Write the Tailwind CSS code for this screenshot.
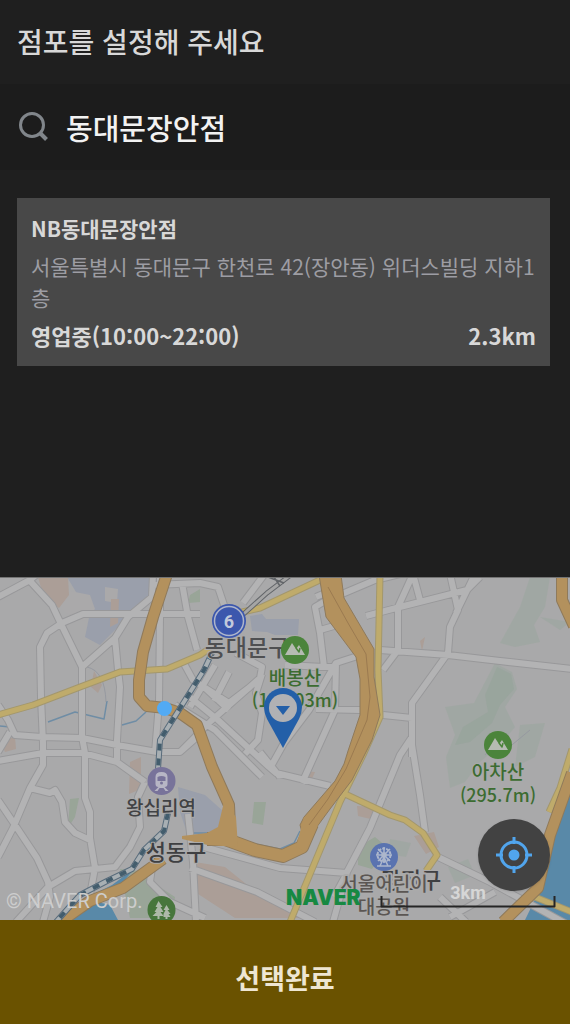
<!DOCTYPE html>
<html lang="ko">
<head>
<meta charset="utf-8">
<meta name="viewport" content="width=device-width, initial-scale=1">
<title>점포 설정</title>
<script src="https://cdn.jsdelivr.net/npm/@tailwindcss/browser@4"></script>
</head>
<body class="flex min-h-screen flex-col bg-[#1f1f1f] font-['Noto_Sans_CJK_KR',sans-serif] text-[#d8d8d8]">
<header class="px-[17px] pt-[19px] pb-[21px]">
  <h1 class="text-[28px] leading-[44px] font-medium">점포를 설정해 주세요</h1>
</header>
<main class="flex flex-1 flex-col">
  <form class="flex h-[86px] items-center gap-4 bg-[#1c1c1c] px-[18px]" onsubmit="return false">
    <label for="q" class="shrink-0" aria-label="점포 검색">
      <svg class="size-8" viewBox="0 0 32 32" fill="none" stroke="#81868b" stroke-width="3"><circle cx="14" cy="14" r="11.500"/><path d="M22 22l6.500 6.500" stroke-width="4"/></svg>
    </label>
    <input id="q" type="text" value="동대문장안점" class="w-full min-w-0 bg-transparent text-[29px] leading-10 font-medium text-[#f2f2f2] outline-none">
  </form>
  <section class="mx-[17px] mt-7 mr-5 bg-[#484848] px-[14px] py-[15px]">
    <h2 class="text-[21px] leading-[30px] font-bold">NB동대문장안점</h2>
    <p class="-mr-1 mt-2 text-[21px] leading-[31px] break-all text-[#9d9da3]">서울특별시 동대문구 한천로 42(장안동) 위더스빌딩 지하1층</p>
    <p class="mt-1.5 flex justify-between text-[22px] leading-8 font-bold"><span>영업중(10:00~22:00)</span><span>2.3km</span></p>
  </section>
</main>
<section class="relative h-[343px] overflow-hidden bg-[#a8a8a8]" aria-label="지도">
  <svg class="block h-full w-full" viewBox="0 0 570 343" preserveAspectRatio="xMidYMid slice" fill="none" stroke-linejoin="round">
    <defs>
      <g id="mountain"><circle r="14" fill="#4b843b"/><path d="M-10 5L-3-7 1-1 4-5 10 5Z" fill="#b5bbb2"/><path d="M1-2l3 4 1-4" stroke="#4b843b" stroke-width="1.500"/></g>
      <path id="roads" d="M-2 20L30 3 36-2M30 4L52 28 61 47 82 90 82 160 85 176 85 221 90 235 90 261 95 291 90 318M200 37L83 37 62 46 47 56 40 70 41 120 43 166 43 188 30 211 13 251-2 280M153-2L152 20 128 40 115 61 82 90M115 61L118 93 120 110 117 163 117 183M160-2L160 40 159 126 155 176M182 6L188 40 197 73M153 8L200 6 218 10 224 28M-2 128L8 143 15 158 42 160 82 161 117 168 157 175 180 175 197 160M-2 184L43 176 83 176 117 185 145 205M-2 175L10 155M-2 223L15 248 37 281 48 305 50 320 43 345M30 211L50 216 55 213 62 225 65 245 75 256 90 263M16 345L48 310 75 294 95 292 115 290 130 270 140 250 138 220 145 205M264-2L243 26M182 83L193 103 229 126 250 110M204 110L229 133M186 117L218 143 269 190 276 196 330 209M175 128L215 153 262 200M236 76L262 90 260 101 211 144 180 175M215 88L190 130M229 95L214 124M262 97L256 116 262 136 258 163 245 177M269 193L284 166 309 133 336 86 370 75M302 206L335 133 336 86M316 20L330 14M332 20L315 30 320 56 324 90M320 53L355 43M309 90L336 90M285 88L324 90M316 132L360 133M342 17L375 3 400-3M366 39L400 30 467 13 480 0M413-3L398 30 398 73 383 93M413-3L420 23M450-3L458 33 450 50 448 76 412 126 412 180M475-3L456 36M380 73L448 78 500 84 572 92M383 138L412 141M412 160L400 178 370 251 347 295 333 345M412 168L420 218 425 255M190 291L257 315 315 345M200 269L280 291 347 296M188 237L193 285 196 345M438 280L490 305 572 350M347 296L334 320M440 320L466 345M450 340L495 315M152 290L150 305 170 325 205 341M260 175L280 200"/>
      <path id="rail" d="M212 76L204 93 160 163 158 192M168 236L164 254 144 273 132 292 107 304 80 318 56 345"/>
      <path id="highway" d="M167-3L153 40 143 75 139 103 139 120 147 129 165 131 180 136 197 148 212 190 229 228 230 250 225 262"/>
      <path id="ring" d="M207 262L225 262 255 273 283 279 302 270 312 247"/>
      <path id="yel" d="M-2 138L33 128 80 110 120 95 167 92 200 78 212 70M238 36L260 31 322 2M380-2L378 93 380 140 363 178 340 225 290 345M345 217L390 238 405 243 423 256 437 278 426 294M572 172L560 211 549 235M530 318L572 335"/>
    </defs>
    <rect width="570" height="343" fill="#a9a9aa"/>
    <!-- land use -->
    <path fill="#9a9fab" d="M67 0H150V22L125 42 115 53 100 68 85 60 90 36 82 25ZM178 210L205 218 223 234 220 252 210 260 188 259 180 235ZM250 39L262 37 266 42 299 42 298 58 275 58 267 55 252 54Z"/>
    <path fill="#aaa9aa" d="M70 14L90 18 95 32 84 44 66 36 60 30ZM105 10L118 12 117 26 105 24Z"/>
    <path fill="#ab9e97" d="M38 0H68L69 18 59 31 44 21ZM111 22L119 22 118 46 110 50ZM94 94L102 108 98 116 91 110ZM195 285L225 290 256 315 313 341H235L195 315ZM357 229L378 230 375 243 358 239ZM305 194L315 195 311 204 302 203ZM0 164L15 160 16 172 5 175ZM414 259L434 255 439 270 426 277ZM130 185L141 180 141 212 129 217ZM420 64L425 60 422 74Z"/>
    <path fill="#99a598" d="M254 225L266 225 263 248 252 246ZM70 222L79 221 75 240 68 251ZM190 18L200 12V25L188 26ZM120 292L150 295 152 305 175 320 172 341H130ZM358 270L375 260 387 270 372 292 358 288Z"/>
    <path fill="#9ba69f" d="M530 0H550L545 30 534 48 540 65 515 70 500 66 520 30ZM495 86L512 95 517 112 505 130 515 150 500 168 480 185 465 205 450 211 446 180 455 158 445 130 474 126ZM520 148L545 146 535 180 515 190ZM390 262L411 266 406 280 388 277ZM448 290L468 282 475 298 455 306ZM540 40L570 45 560 53Z" opacity=".6"/>
    <path fill="#94a39a" d="M497 90L511 97 514 112 500 128 492 146 470 165 455 168 463 150 488 135 485 118Z" opacity=".6"/>
    <path fill="#5989a8" d="M572 200L558 240 550 270 540 312 525 343H572ZM135 291L112 308 98 315 118 311ZM72 343L93 324 110 328 118 343Z"/>
    <path stroke="#6f8da5" stroke-width="1.500" d="M48 145L75 135 104 142 107 124M122 148L136 144 146 135M0 149L10 150M192 256H208M238 262L255 267 280 272 294 266 300 254"/>
    <path stroke="#9699a0" stroke-width="1" d="M87 90Q105 94 106 125M500 162L485 178M507 172L530 153"/>
    <use href="#roads" stroke="#98989a" stroke-width="8"/>
    <use href="#roads" stroke="#b3b3b4" stroke-width="6"/>
    <!-- yellow arterials -->
    <use href="#yel" stroke="#a3976d" stroke-width="7"/>
    <use href="#yel" stroke="#bfab6b" stroke-width="5"/>
    <!-- expressways -->
    <path stroke="#8f7a5b" stroke-width="12" d="M163 282L123 311 90 324 60 345M572 196L550 258 538 311 503 345M562-3L562 23 574 49"/>
    <use href="#highway" stroke="#8f7a5b" stroke-width="12"/>
    <use href="#ring" stroke="#8f7a5b" stroke-width="14"/>
    <path fill="#b3915d" stroke="#8f7a5b" d="M319-2H341L344 21 374 72V100L380 138 372 163 352 203 330 232 305 266 300 248 304 240 335 204 344 187 348 174 360 138V102L356 80 326 40Z"/>
    <path stroke="#b3915d" stroke-width="10" d="M163 282L123 311 90 324 60 345M572 196L550 258 538 311 503 345M562-3L562 23 574 49"/>
    <use href="#highway" stroke="#b3915d" stroke-width="10"/>
    <use href="#ring" stroke="#b3915d" stroke-width="12"/>
    <path fill="#b3915d" d="M224 225L236 240 238 270 208 268 182 262V259L207 256 218 250ZM304 240L322 240 305 274 296 270Z"/>
    <path stroke="#9b7a50" d="M328 10L348 46 366 77 370 120 367 143 346 192 328 222 309 248"/>
    <!-- railways -->
    <path stroke="#626569" stroke-width="5" d="M292-3L267 16 238 42"/><path stroke="#a5a5a5" stroke-width="3" d="M292-3L267 16 238 42"/>
    <path stroke="#626569" stroke-width="1.500" d="M274 0L280 9M268 0L284 6"/>
    <use href="#rail" stroke="#596c7c" stroke-width="6"/>
    <use href="#rail" stroke="#a8afb3" stroke-width="4"/>
    <use href="#rail" stroke="#435d6d" stroke-width="4" stroke-dasharray="7 8"/>
    <circle cx="164.500" cy="131.500" r="7.500" fill="#52aaf4"/>
    <!-- place labels -->
    <g class="font-['Noto_Sans_CJK_KR',sans-serif] font-medium" text-anchor="middle" paint-order="stroke" stroke="#aaaaaa" stroke-width="2">
      <text x="247" y="79" font-size="23" fill="#4f5052">동대문구</text>
      <text x="176" y="283" font-size="22" fill="#3f4042">성동구</text>
      <text x="411" y="311" font-size="22" fill="#3f4042">광진구</text>
      <text x="161" y="238" font-size="19" fill="#414244">왕십리역</text>
      <g fill="#3c6c31" font-size="19"><text x="295" y="108">배봉산</text><text x="295" y="130" font-size="18">(110.03m)</text><text x="498" y="202">아차산</text><text x="498" y="225" font-size="18">(295.7m)</text></g>
      <g fill="#5b5653" font-size="19" stroke-width="4"><text x="384" y="314">서울어린이</text><text x="384" y="337">대공원</text></g>
    </g>
    <circle cx="229" cy="44" r="17" fill="#3c57ad"/><circle cx="229" cy="44" r="14.500" stroke="#aeb5cb" stroke-width="1.500"/>
    <text class="font-['Roboto',sans-serif] font-bold" x="229" y="51" font-size="18" text-anchor="middle" fill="#c2c9dc">6</text>
    <use href="#mountain" x="295" y="73"/><use href="#mountain" x="498" y="168"/>
    <!-- station -->
    <g transform="translate(161.500 204)"><circle r="14" fill="#78739a"/><path fill="#b7b6c5" d="M-6-4Q-6-9 0-9T6-4V3Q6 6 3 6L7 10H4L2 7H-2L-4 10H-7L-3 6Q-6 6-6 3Z"/><path fill="#78739a" d="M-4-4Q0-6 4-4V0H-4Z"/><circle cy="2" r="1.500" fill="#78739a"/></g>
    <!-- amusement park -->
    <g transform="translate(384 280)"><circle r="14" fill="#5a73b0"/><g stroke="#acb6cc" stroke-width="1.500"><circle cy="-2" r="6.500" stroke-width="2" stroke-dasharray="3 1"/><circle cy="-2" r="2"/><path d="M0-10V6M-8-2H8M-6-8L6 4M6-8L-6 4M0 0L-4 9M0 0L4 9M-7 9H7"/></g></g>
    <!-- forest -->
    <g transform="translate(161.500 333)"><circle r="14" fill="#47763c"/><path fill="#adb9a9" d="M-3-9L1-3H-1L2 2H-1L2 6H-2V9H-4V6H-9L-5 2H-7L-4-3H-6ZM5-5L8 0H6L9 4H7L9 7H6V9H4V7H2V4L4 0H2Z"/></g>
    <!-- store pin -->
    <path d="M283 171L267 142Q264 136 264 130A19 19 0 0 1 302 130Q302 136 299 142Z" fill="#235fa8"/><circle cx="283" cy="131" r="14" fill="#b0b1b4"/><path d="M276 129H290L283 138Z" fill="#235fa8"/>
    <!-- attribution and scale -->
    <text class="font-['Roboto',sans-serif]" x="6" y="331" font-size="20" fill="#cdcdcd">© NAVER Corp.</text>
    <text class="font-['Inter',sans-serif] font-black" x="286" y="328" font-size="21" fill="#178942">NAVER</text>
    <path stroke="#252525" stroke-width="2" d="M381.500 319V329.500H554.500V319"/>
    <text class="font-['Roboto',sans-serif] font-bold" x="468" y="322" font-size="18" text-anchor="middle" fill="#d6d6d6">3km</text>
    <path d="M0 .5H570" stroke="#747474"/>
  </svg>
  <button type="button" aria-label="현재 위치" class="absolute right-5 bottom-[29px] flex size-[72px] items-center justify-center rounded-full bg-[#424242] shadow">
    <svg class="size-9" viewBox="0 0 36 36" fill="none" stroke="#51a5ed" stroke-width="3"><circle cx="18" cy="18" r="13"/><circle cx="18" cy="18" r="5.500" fill="#51a5ed" stroke="none"/><path d="M18 0V7M18 29V36M0 18H7M29 18H36"/></svg>
  </button>
</section>
<button type="button" class="h-[104px] w-full bg-[#6a5200] pt-3 text-[27px] leading-10 font-bold text-[#eee6d2]">선택완료</button>
</body>
</html>
